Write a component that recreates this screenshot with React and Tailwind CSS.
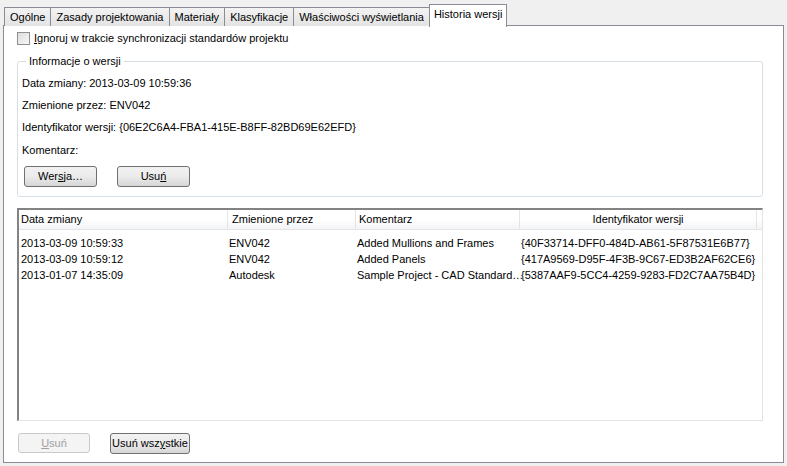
import React from 'react';

const tabs = ['Ogólne', 'Zasady projektowania', 'Materiały', 'Klasyfikacje', 'Właściwości wyświetlania'];

const history = [
  ['2013-03-09 10:59:33', 'ENV042', 'Added Mullions and Frames', '{40F33714-DFF0-484D-AB61-5F87531E6B77}'],
  ['2013-03-09 10:59:12', 'ENV042', 'Added Panels', '{417A9569-D95F-4F3B-9C67-ED3B2AF62CE6}'],
  ['2013-01-07 14:35:09', 'Autodesk', 'Sample Project - CAD Standard…', '{5387AAF9-5CC4-4259-9283-FD2C7AA75B4D}'],
];

function Button({ children, className = '' }) {
  return (
    <button
      className={`h-[21px] rounded-[3px] border border-[#707070] bg-gradient-to-b from-[#f2f2f2] via-[#ebebeb] to-[#d6d6d6] text-black ${className}`}
    >
      {children}
    </button>
  );
}

export default function App() {
  return (
    <div
      className="w-[787px] h-[466px] bg-[#f0f0f0] text-[11px] text-black overflow-hidden"
      style={{ fontFamily: '"Liberation Sans", Arial, sans-serif' }}
    >
      {/* tab strip */}
      <div className="flex items-end h-[26px] pl-[4px]">
        {tabs.map((t) => (
          <div
            key={t}
            className="h-[19px] -mr-px px-[5px] flex items-center border border-b-0 border-[#898c95] bg-gradient-to-b from-[#f3f3f3] to-[#e3e3e3]"
          >
            {t}
          </div>
        ))}
        <div className="relative z-10 h-[23px] -mb-px px-[4px] pb-[3px] flex items-center border border-b-0 border-[#898c95] bg-white">
          Historia wersji
        </div>
      </div>

      {/* page */}
      <div className="ml-[3px] w-[781px] h-[438px] -mt-px border border-[#898c95] bg-white px-[13px] flex flex-col">
        <label className="mt-[6px] flex items-center gap-[4px] h-[13px]">
          <span className="w-[13px] h-[13px] border border-[#8e8f8f] bg-gradient-to-br from-[#dcdcdc] to-[#f8f8f8]" />
          <span>
            <u>I</u>gnoruj w trakcie synchronizacji standardów projektu
          </span>
        </label>

        <fieldset className="mt-[10px] w-[746px] h-[142px] border border-[#d5dfe5] rounded-[3px] pl-[4px]">
          <legend className="ml-[4px] px-[3px] leading-[13px]">Informacje o wersji</legend>
          <div className="flex flex-col">
            <div className="h-[22px] mt-[4px] flex items-center">Data zmiany: 2013-03-09 10:59:36</div>
            <div className="h-[22px] flex items-center">Zmienione przez: ENV042</div>
            <div className="h-[23px] flex items-center">Identyfikator wersji: {'{06E2C6A4-FBA1-415E-B8FF-82BD69E62EFD}'}</div>
            <div className="h-[22px] flex items-center">Komentarz:</div>
            <div className="mt-[5px] flex gap-[20px] pl-[2px]">
              <Button className="w-[73px]">
                Wer<u>s</u>ja…
              </Button>
              <Button className="w-[73px]">
                Usu<u>ń</u>
              </Button>
            </div>
          </div>
        </fieldset>

        {/* list view */}
        <div className="mt-[11px] w-[746px] h-[213px] border border-[#e3e3e3] border-t-[#838383] border-l-[#838383] border-t-2 border-l-2 flex flex-col">
          <div className="flex h-[20px] bg-gradient-to-b from-white via-white to-[#f3f4f6] border-b border-[#e5e5e5]">
            <div className="w-[209px] pl-[2px] border-r border-[#e5e5e5] flex items-center">Data zmiany</div>
            <div className="w-[128px] pl-[4px] border-r border-[#e5e5e5] flex items-center">Zmienione przez</div>
            <div className="w-[164px] pl-[3px] border-r border-[#e5e5e5] flex items-center">Komentarz</div>
            <div className="w-[237px] border-r border-[#e5e5e5] flex items-center justify-center">Identyfikator wersji</div>
            <div className="flex-1" />
          </div>
          <div className="pt-[5px] flex flex-col">
            {history.map((r) => (
              <div key={r[0]} className="flex h-[16px] items-center">
                <div className="w-[209px] pl-[2px]">{r[0]}</div>
                <div className="w-[128px] pl-[1px]">{r[1]}</div>
                <div className="w-[164px] pl-[1px] whitespace-nowrap">{r[2]}</div>
                <div className="w-[237px] pl-[1px] whitespace-nowrap">{r[3]}</div>
              </div>
            ))}
          </div>
        </div>

        <div className="mt-[12px] flex gap-[20px] pl-px">
          <button className="w-[72px] h-[20px] rounded-[3px] border border-[#c9c9c9] bg-[#f4f4f4] text-[#a0a0a0]">
            <u>U</u>suń
          </button>
          <Button className="w-[80px] border-[#3c3c3c]">
            Usuń wsz<u>y</u>stkie
          </Button>
        </div>
      </div>
    </div>
  );
}
